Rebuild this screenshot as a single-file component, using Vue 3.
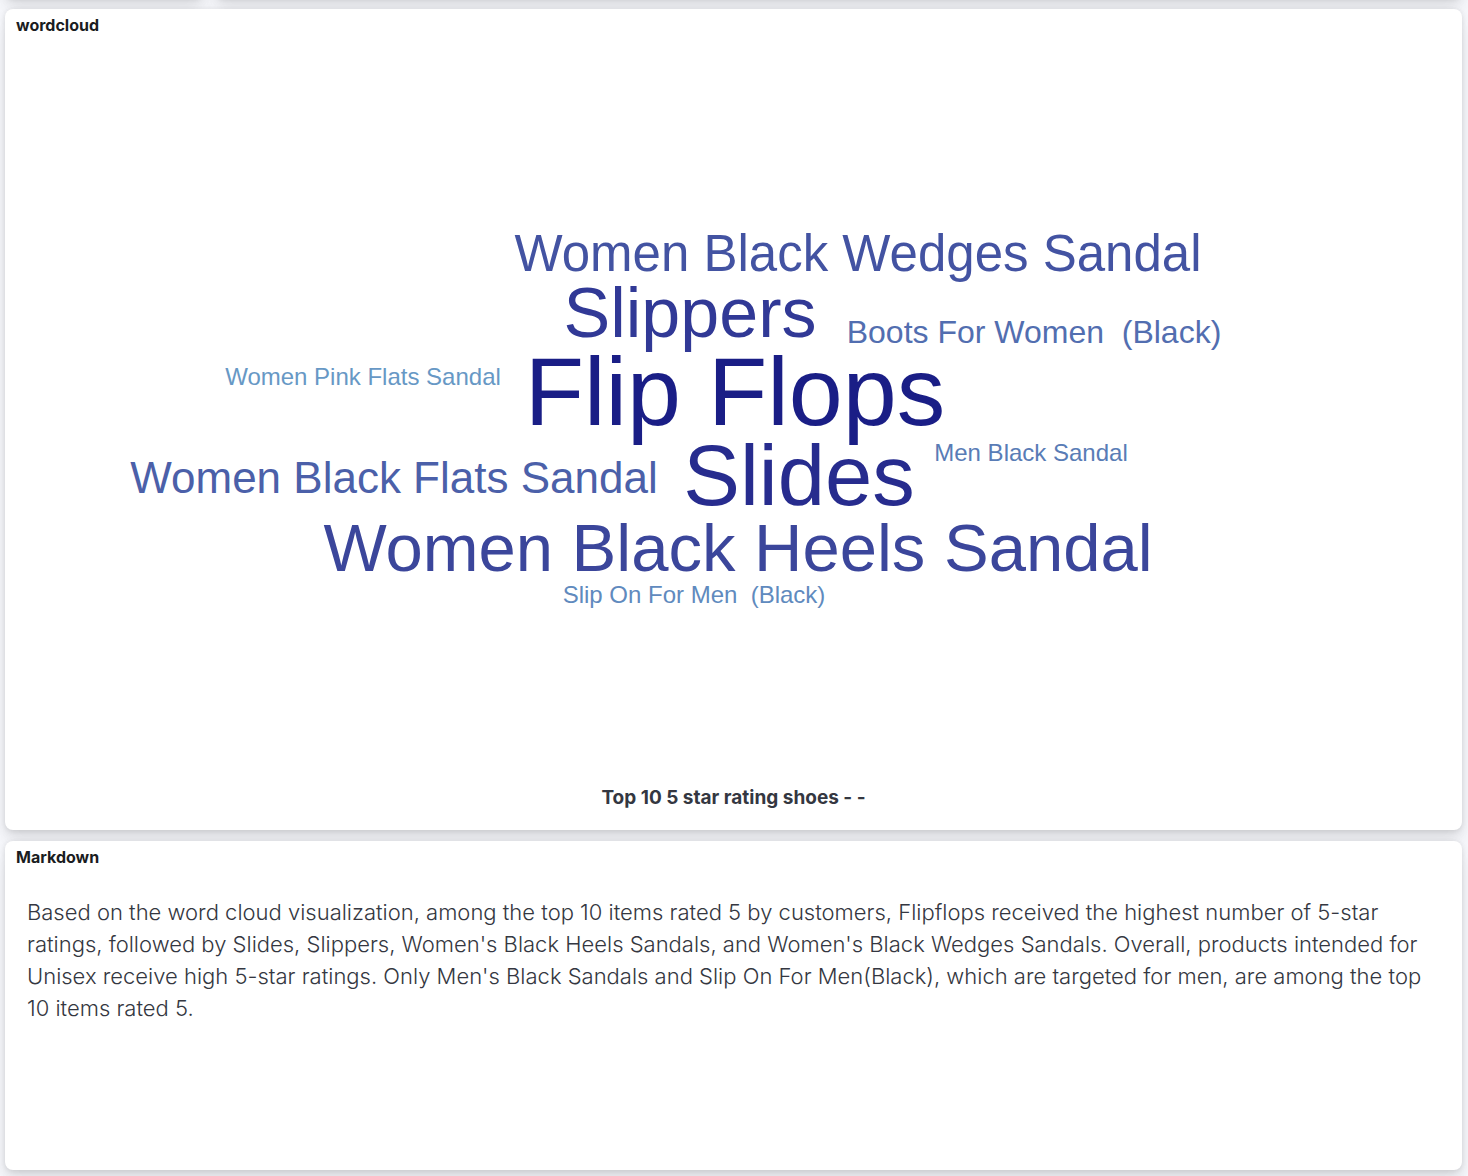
<script setup>
const words = [
  { text: 'Flip Flops', x: 730, y: 415, size: 97, color: '#1a1e86' },
  { text: 'Slides', x: 794, y: 495, size: 85, color: '#272c8e' },
  { text: 'Slippers', x: 685, y: 327, size: 70, color: '#313996' },
  { text: 'Women Black Heels Sandal', x: 733, y: 561, size: 67, color: '#3b469b' },
  { text: 'Women Black Wedges Sandal', x: 853, y: 261, size: 51, color: '#4353a2' },
  { text: 'Women Black Flats Sandal', x: 389, y: 483, size: 44, color: '#4b60a9' },
  { text: 'Boots For Women  (Black)', x: 1029, y: 333, size: 32, color: '#526eb0' },
  { text: 'Men Black Sandal', x: 1026, y: 451, size: 24, color: '#597cb6' },
  { text: 'Slip On For Men  (Black)', x: 689, y: 593, size: 24, color: '#608abe' },
  { text: 'Women Pink Flats Sandal', x: 358, y: 375, size: 24, color: '#6798c5' },
]
</script>

<template>
  <main class="dashboard">
    <div class="previous-row" aria-hidden="true">
      <div class="panel previous-narrow"></div>
      <div class="panel previous-wide"></div>
    </div>

    <section class="panel">
      <h2 class="panel-title">wordcloud</h2>
      <svg class="cloud" viewBox="0 31 1457 745" role="img" aria-label="Top 10 5 star rating shoes">
        <text
          v-for="word in words"
          :key="word.text"
          class="word"
          :x="word.x"
          :y="word.y"
          :font-size="word.size"
          :fill="word.color"
          text-anchor="middle"
        >{{ word.text }}</text>
      </svg>
      <p class="cloud-label">Top 10 5 star rating shoes - -</p>
    </section>

    <section class="panel markdown-panel">
      <h2 class="panel-title">Markdown</h2>
      <p class="markdown">
        Based on the word cloud visualization, among the top 10 items rated 5 by customers, Flipflops
        received the highest number of 5-star ratings, followed by Slides, Slippers, Women's Black Heels
        Sandals, and Women's Black Wedges Sandals. Overall, products intended for Unisex receive high
        5-star ratings. Only Men's Black Sandals and Slip On For Men(Black), which are targeted for men,
        are among the top 10 items rated 5.
      </p>
    </section>
  </main>
</template>

<style>
body {
  margin: 0;
  background: #f7f8fc;
}
</style>

<style scoped>
.dashboard {
  display: flex;
  flex-direction: column;
  gap: 11px;
  padding: 0 6px 6px 5px;
  overflow: hidden;
  font-family: Inter, "Liberation Sans", sans-serif;
  color: #343741;
}

.previous-row {
  display: flex;
  gap: 11px;
  height: 40px;
  margin-top: -42px;
}

.previous-narrow {
  flex: 0 0 199px;
}

.previous-wide {
  flex: 1;
}

.panel {
  position: relative;
  background: #fff;
  border-radius: 8px;
  box-shadow:
    0 1px 5px rgba(0, 0, 0, 0.08),
    0 3px 11px rgba(0, 0, 0, 0.06),
    0 8px 16px rgba(0, 0, 0, 0.05),
    0 20px 20px rgba(0, 0, 0, 0.04);
}

.panel-title {
  margin: 0;
  padding: 0 11px;
  font-size: 16px;
  font-weight: 700;
  line-height: 32px;
  color: #1a1c21;
}

.cloud {
  display: block;
  width: 100%;
  height: auto;
}

.word {
  font-family: "Liberation Sans", Arial, sans-serif;
  white-space: pre;
}

.cloud-label {
  margin: 0;
  padding-bottom: 20px;
  font-size: 19px;
  font-weight: 700;
  line-height: 24px;
  text-align: center;
}

.markdown-panel {
  min-height: 329px;
}

.markdown {
  margin: 0;
  padding: 23px 16px 22px 22px;
  font-size: 22px;
  font-weight: 350;
  line-height: 32px;
}
</style>
